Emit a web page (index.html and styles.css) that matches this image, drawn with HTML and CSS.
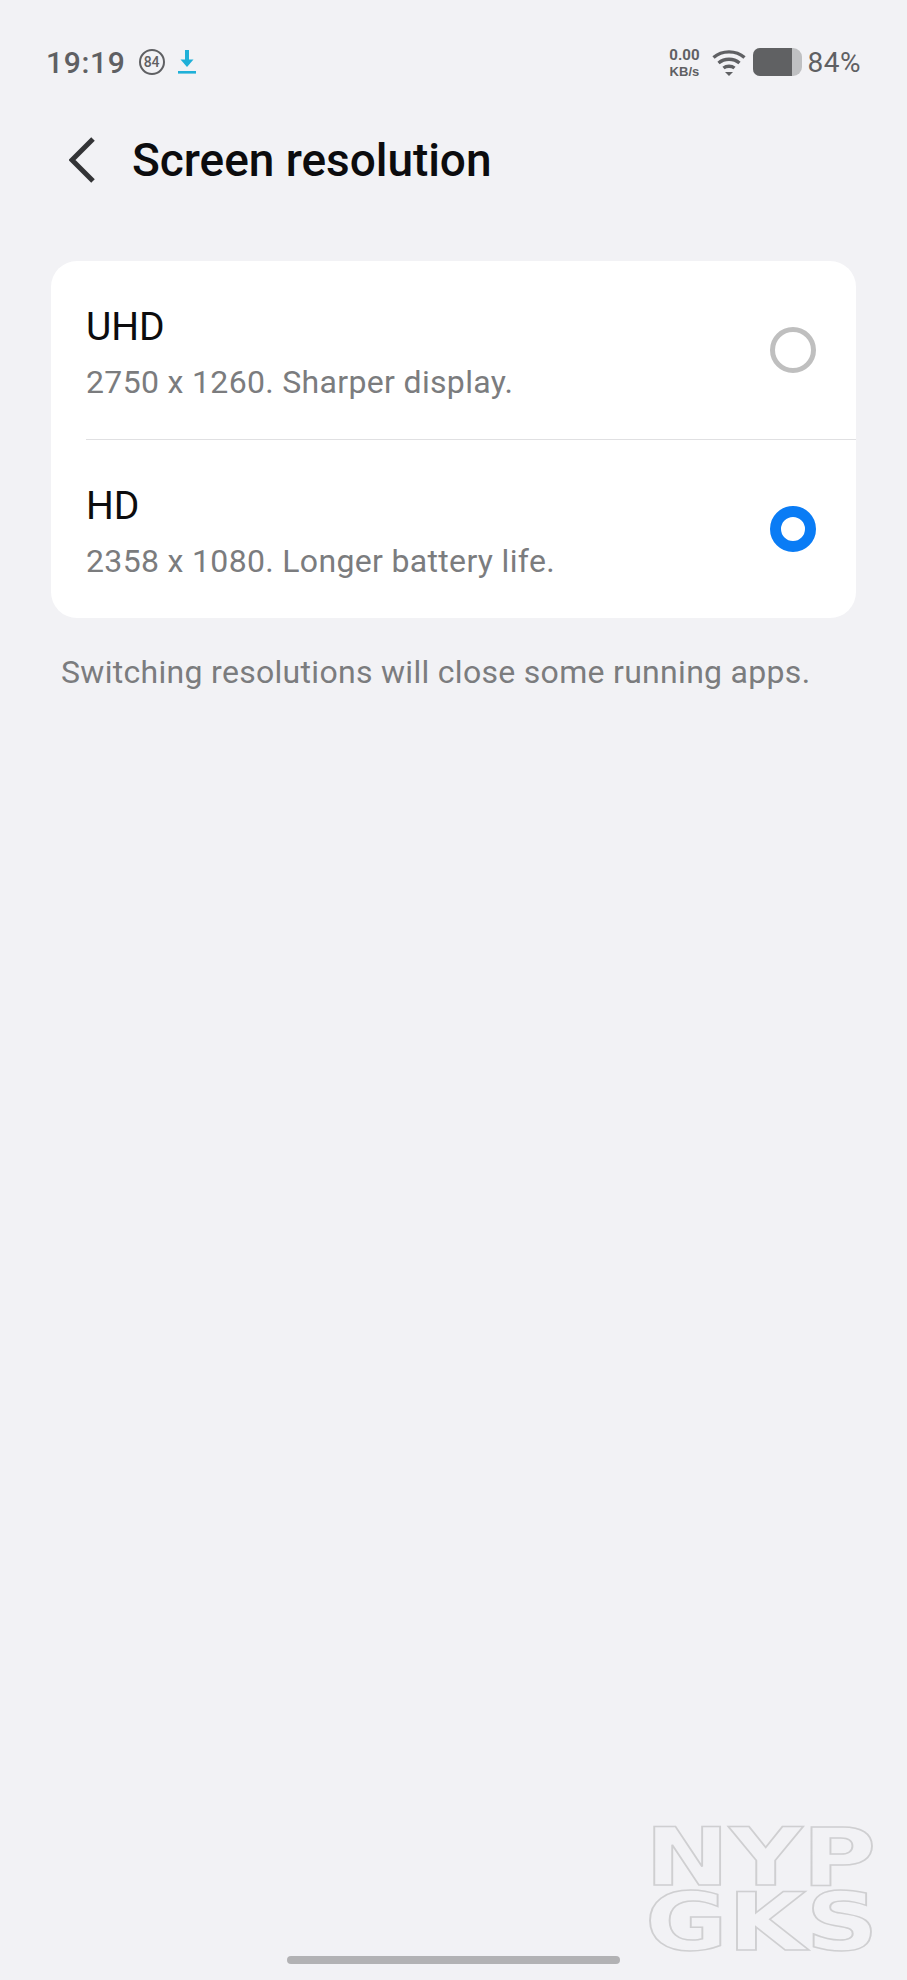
FILE: index.html
```html
<!DOCTYPE html>
<html lang="en">
<head>
    <meta charset="UTF-8">
    <meta name="viewport" content="width=device-width, initial-scale=1.0">
    <title>Screen resolution</title>
    <link rel="stylesheet" href="styles.css">
</head>
<body>
    <div class="status">
        <div class="status_left">
            <span class="time">19:19</span>
            <span class="badge">84</span>
            <svg class="download" width="18" height="24" viewBox="0 0 18 24">
                <path d="M9 0V13" stroke="#1fb0d8" stroke-width="4" fill="none"/>
                <path d="M2.5 9.5H15.5L9 17Z" fill="#1fb0d8"/>
                <rect x="0" y="21" width="18" height="2.6" fill="#1fb0d8"/>
            </svg>
        </div>
        <div class="status_right">
            <div class="speed"><span>0.00</span><span class="unit">KB/s</span></div>
            <svg class="wifi" width="34" height="28" viewBox="0 0 34 28">
                <g fill="none" stroke="#5f6063" stroke-width="3.4">
                    <path d="M1.5 9.5C10 2 24 2 32.5 9.5"/>
                    <path d="M6.5 15C12.5 10 21.500 10 27.500 15"/>
                    <path d="M11.500 20C14.500 17.600 19.500 17.600 22.500 20"/>
                </g>
                <path d="M13 24H21L17 28Z" fill="#5f6063"/>
            </svg>
            <div class="battery">
                <div class="battery_fill"></div>
            </div>
            <span class="percent">84%</span>
        </div>
    </div>

    <div class="header">
        <svg class="back" width="26" height="46" viewBox="0 0 26 46">
            <path d="M24 2L3 23L24 44" fill="none" stroke="#333436" stroke-width="5"/>
        </svg>
        <h1>Screen resolution</h1>
    </div>

    <div class="card">
        <div class="row">
            <div class="row_text">
                <p class="name">UHD</p>
                <p class="desc">2750 x 1260. Sharper display.</p>
            </div>
            <span class="radio"></span>
        </div>
        <div class="row">
            <div class="row_text">
                <p class="name">HD</p>
                <p class="desc">2358 x 1080. Longer battery life.</p>
            </div>
            <span class="radio checked"></span>
        </div>
    </div>

    <p class="note">Switching resolutions will close some running apps.</p>

    <div class="home_bar"></div>

    <div class="watermark">NYP GKS</div>
</body>
</html>
```

FILE: styles.css
```css
html,body{
    margin:0;
    padding:0;
}
body{
    position:relative;
    width:907px;
    height:1980px;
    overflow:hidden;
    display:flex;
    flex-direction:column;
    background-color:#f2f2f5;
    font-family:Roboto,"Liberation Sans",sans-serif;
}
p,h1{
    margin:0;
}
.status{
    height:44px;
    margin-top:40px;
    padding:0 46px 0 46px;
    display:flex;
    justify-content:space-between;
    align-items:center;
    color:#5f6063;
}
.status_left,.status_right{
    display:flex;
    align-items:center;
}
.time{
    font-size:30px;
    font-weight:500;
    letter-spacing:.7px;
}
.badge{
    width:26px;
    height:26px;
    margin-left:13px;
    box-sizing:border-box;
    border:2px solid #5f6063;
    border-radius:50%;
    display:flex;
    align-items:center;
    justify-content:center;
    font-size:14px;
    font-weight:500;
}
.download{
    margin-left:13px;
}
.speed{
    display:flex;
    flex-direction:column;
    align-items:center;
    font-size:15px;
    font-weight:700;
    line-height:18px;
}
.unit{
    font-size:13px;
    line-height:15px;
    font-family:"Liberation Sans",sans-serif;
}
.wifi{
    margin-left:12px;
}
.battery{
    width:49px;
    height:28px;
    margin-left:7px;
    border-radius:7px 9px 9px 7px;
    background-color:#bfc0c2;
    overflow:hidden;
}
.battery_fill{
    width:39px;
    height:100%;
    background-color:#606163;
}
.percent{
    margin-left:6px;
    font-size:28px;
    letter-spacing:.5px;
}
.header{
    height:100px;
    padding-left:69px;
    margin-top:26px;
    display:flex;
    align-items:center;
}
h1{
    margin-left:37px;
    font-size:46px;
    font-weight:500;
    letter-spacing:-.05px;
    color:#0c0c0e;
}
.card{
    width:805px;
    margin:51px 0 0 51px;
    background-color:#fff;
    border-radius:26px;
}
.row{
    height:178px;
    padding:0 40px 0 35px;
    display:flex;
    justify-content:space-between;
    align-items:center;
}
.row + .row{
    border-top:1px solid #e0e0e2;
    margin-left:35px;
    padding-left:0;
}
.row_text{
    padding-top:5px;
}
.name{
    font-size:39px;
    line-height:50px;
    color:#0c0c0e;
}
.desc{
    margin-top:8px;
    font-size:32px;
    letter-spacing:.33px;
    line-height:44px;
    color:#7b7c7e;
}
.radio{
    width:46px;
    height:46px;
    box-sizing:border-box;
    border:5px solid #bfbfbf;
    border-radius:50%;
}
.radio.checked{
    border:11px solid #0a7cf5;
}
.note{
    margin:32px 0 0 61px;
    font-size:32px;
    letter-spacing:.3px;
    line-height:44px;
    color:#7b7c7e;
}
.home_bar{
    width:333px;
    height:8px;
    margin:auto auto 16px;
    border-radius:4px;
    background-color:#b2b2b4;
}
.watermark{
    position:absolute;
    left:645px;
    top:1825px;
    width:200px;
    font-family:"DejaVu Sans",sans-serif;
    font-size:80px;
    font-weight:700;
    line-height:65px;
    color:transparent;
    -webkit-text-stroke:1.5px #cfcfd1;
    transform:scaleX(1.26);
    transform-origin:left top;
}
```
